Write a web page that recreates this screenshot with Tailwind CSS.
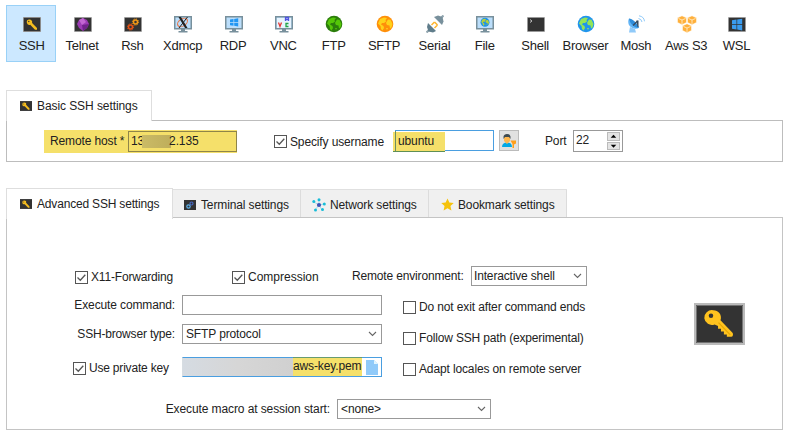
<!DOCTYPE html>
<html lang="en">
<head>
<meta charset="utf-8">
<title>Session settings</title>
<script src="https://cdn.jsdelivr.net/npm/@tailwindcss/browser@4"></script>
</head>
<body class="w-[785px] h-[433px] overflow-hidden bg-white text-[12px] leading-[16px] tracking-[-0.13px] text-[#222] whitespace-nowrap font-['Liberation_Sans',Arial,sans-serif]">
<svg class="hidden">
  <symbol id="key" viewBox="0 0 48 40">
    <path fill="#333" d="M0 0h48v40H0z"/>
    <path fill="#ffc31f" d="M17.500 5.500a7.800 7.800 0 0 1 7.500 10.500L37.500 29.500Q38.500 33 36 33.500H31.500v-2.500h-3v-3h-3v-3h-3v-3l-3.500-1.500A7.800 7.800 0 1 1 17.500 5.500z"/>
    <path stroke="#e8a800" stroke-width="1.200" d="M23 18.500l12 13"/>
    <circle cx="15.300" cy="11.300" r="2.300" fill="#333"/>
  </symbol>
  <symbol id="keysmall" viewBox="0 0 17 14">
    <path fill="#333" d="M0 0h17v14H0z"/>
    <path fill="#f5bd1f" d="M6 2a2.700 2.700 0 0 1 2.600 3.400L13.500 10.500V12.300H11.500L6.700 7.300A2.700 2.700 0 1 1 6 2z"/>
    <circle cx="5.300" cy="4" r=".7" fill="#333"/>
  </symbol>
  <symbol id="monitor" viewBox="0 0 18 17">
    <path fill="#78909c" d="M0 0h18v13.500H0zM7 13h4v2h2.500v1.500h-9V15H7z"/>
    <path fill="#bbdefb" d="M1.500 1.500h15v10.500h-15z"/>
  </symbol>
  <symbol id="globe" viewBox="0 0 16 16">
    <path d="M3 3L7 1.500 10 2 8.500 4 9 5.500 7 7 5 7 4 8.500 6.500 10 7 12 5.500 14.500 4 13 3.500 10 1 7.500zM11 3.500l2.500.2L15.500 8l-1 3.500-1.500 1-.5-3-2.500-.5L9 7l1-2zM9 12l2 0-1 2z"/>
  </symbol>
  <symbol id="check" viewBox="0 0 13 13"><path fill="none" stroke="#555" stroke-width="1.300" d="M2.500 6.500l2.800 2.800 5-5.500"/></symbol>
  <symbol id="down" viewBox="0 0 9 6"><path fill="none" stroke="#666" stroke-width="1.100" d="M1 1l3.500 3.500L8 1"/></symbol>
</svg>

<nav class="flex ml-[6px] pt-[5px] text-[13px] tracking-[-0.25px] [&>div]:w-[50.35px] [&>div]:h-[57px] [&>div]:shrink-0 [&>div]:flex [&>div]:flex-col [&>div]:items-center [&>div]:pl-px [&>div]:pt-[10px] [&>div>svg]:w-[18px] [&>div>svg]:h-[18px] [&>div>svg]:mb-[5px] [&>div>svg]:ml-[1px]">
  <div class="bg-[#cce8ff] shadow-[inset_0_0_0_1px_#99d1f7]"><svg viewBox="0 0 18 18"><path fill="#aaa" d="M0 2h18v15H0z"/><use href="#keysmall" x=".5" y="2.500" width="17" height="14"/></svg>SSH</div>
  <div><svg viewBox="0 0 18 18"><path fill="#333" stroke="#999" stroke-width=".5" d="M.5 2.500h17v14H.5z"/><path fill="#9c3bb5" d="M9 3l4 2 2 4-2 4-4 3-4-3-2-4 2-4z"/><path fill="#c267d2" d="M9 3L5 5l3 5 4-3z"/><path fill="#70238a" d="M8 10l7-1-2 4-4 3z"/></svg>Telnet</div>
  <div><svg viewBox="0 0 18 18"><path fill="#333" stroke="#999" stroke-width=".5" d="M.5 2.500h17v14H.5z"/><g fill="none"><circle cx="11.500" cy="7" r="2" stroke="#f59b16" stroke-width="1.500"/><circle cx="11.500" cy="7" r="3.100" stroke="#f59b16" stroke-dasharray="1.200 1.230"/><circle cx="6.500" cy="12" r="2" stroke="#e65315" stroke-width="1.500"/><circle cx="6.500" cy="12" r="3.100" stroke="#e65315" stroke-dasharray="1.200 1.230"/></g></svg>Rsh</div>
  <div><svg viewBox="0 0 18 18"><use href="#monitor" y="1" width="18" height="17"/><ellipse cx="8.500" cy="7.500" rx="5.500" ry="3.500" fill="none" stroke="#e8794a" stroke-width="1.200" transform="rotate(-35 8.500 7.500)"/><path fill="#222" d="M4.500 2h2.500l6.500 11H11z"/><path stroke="#222" stroke-width="1" d="M13.500 2L5 13"/></svg>Xdmcp</div>
  <div><svg viewBox="0 0 18 18"><use href="#monitor" y="1" width="18" height="17"/><path fill="#2196f3" d="M5 4.500l3.500-.5v3H5zM9.200 3.900l4-.6V7h-4zM5 7.700h3.500v3L5 10.200zM9.200 7.700h4v3.700l-4-.6z"/></svg>RDP</div>
  <div><svg viewBox="0 0 18 18"><use href="#monitor" y="1" width="18" height="17"/><path fill="#e8f4fe" d="M2 3h14v10H2z"/><g fill="none" stroke-width="1.300"><path stroke="#e53935" d="M3.500 7.500L5 11.500 6.500 7.500"/><path stroke="#5155e0" d="M10.500 6V2.500h3V6M10.500 4.500h3"/><path stroke="#22a447" d="M13.500 8.500h-2.500v3h2.500"/></g></svg>VNC</div>
  <div><svg viewBox="0 0 18 18"><circle cx="9" cy="9" r="8.300" fill="#2b7d0b"/><use href="#globe" x="1" y="1" width="16" height="16" fill="#55c708"/></svg>FTP</div>
  <div><svg viewBox="0 0 18 18"><circle cx="9" cy="9" r="8.300" fill="#ff8f0a"/><use href="#globe" x="1" y="1" width="16" height="16" fill="#ffd21a"/></svg>SFTP</div>
  <div><svg viewBox="0 0 18 18"><path stroke="#90a4ae" stroke-width="2.200" d="M.5 17.500l4-4M13.500 4.500l4-4"/><path fill="#607d8b" d="M2 8l8 8-3 1.500-4.500-1L1 12z"/><path fill="#78909c" d="M8 2l8 8 1.500-3.500-1-4.500-4.500-1.500z"/><path stroke="#ffb52e" stroke-width="1.500" d="M5.500 10l3-3M8.500 13l3-3M8.500 7l3 3"/></svg>Serial</div>
  <div><svg viewBox="0 0 18 18"><use href="#monitor" y="1" width="18" height="17"/><circle cx="9" cy="7.300" r="4.500" fill="#1e93e8"/><use href="#globe" x="4.700" y="3" width="8.600" height="8.600" fill="#b7cf38"/></svg>File</div>
  <div><svg viewBox="0 0 18 18"><path fill="#333" stroke="#999" stroke-width=".5" d="M.5 2.500h17v14H.5z"/><path fill="none" stroke="#ccc" stroke-width=".9" d="M3 4.500l2 1.500-2 1.500"/></svg>Shell</div>
  <div><svg viewBox="0 0 18 18"><circle cx="9" cy="9" r="8.300" fill="#2095ed"/><use href="#globe" x="1" y="1" width="16" height="16" fill="#94e557"/></svg>Browser</div>
  <div><svg viewBox="0 0 18 18"><path fill="#64b5f6" d="M2 3.500c-2 4 0 9 5 10 2.500.5 4 0 5-.7z"/><path fill="#2f8ddb" d="M2 3.500c3 0 9 5 10 9.300-4 .2-9-3.300-10-9.300z"/><path fill="#90caf9" d="M3 12l5 2 1 3.500H2z"/><path stroke="#34495e" stroke-width="1.300" d="M6 10.500L10.500 6"/><path fill="#34495e" d="M9.500 5.500h2V12h-1z"/><path fill="none" stroke="#90caf9" d="M11.500 3.500q3 .5 3.500 3.500M12 .8q5 .8 5.500 5.500"/></svg>Mosh</div>
  <div><svg class="overflow-visible" viewBox="0 0 18 18"><g fill="#ffb03b" stroke="#fff" stroke-width=".5"><path id="cube" d="M4 .8l4.500 2v4.700L4 9.700-.5 7.500V2.800z"/><use href="#cube" x="10"/><use href="#cube" x="5" y="8"/></g><path fill="none" stroke="#fff0d0" stroke-width=".8" d="M.5 3.500L4 5l3.500-1.500M4 5v4M10.500 3.500L14 5l3.500-1.500M14 5v4M5.500 11.500L9 13l3.500-1.500M9 13v4"/></svg>Aws S3</div>
  <div><svg viewBox="0 0 18 18"><path fill="#333" stroke="#999" stroke-width=".5" d="M.5 2.500h17v14H.5z"/><path fill="#3a9bee" d="M4 5.300l4.500-.7v4.600H4zM9.200 4.500l5-.8v5.500h-5zM4 9.900h4.500v4.600L4 13.800zM9.200 9.900h5v5.500l-5-.8z"/></svg>WSL</div>
</nav>

<section class="ml-[6px] mt-[28px] w-[777px]">
  <div class="relative z-10 flex items-center w-[146px] h-[31px] pl-[13px] border border-b-0 border-[#dedede] bg-white tracking-[-0.08px]"><svg class="w-[12px] h-[10px] mr-[5px] shrink-0"><use href="#keysmall" width="12" height="10"/></svg>Basic SSH settings</div>
  <div class="-mt-px h-[42px] border border-[#bdbdbd] flex items-start pt-[9px]">
    <div class="flex items-center w-[193px] h-[23px] ml-[37px] pl-[6px] bg-[#f5e06a] leading-[14px]"><span class="pb-[2px]">Remote host *</span>
      <div class="flex items-center ml-auto w-[109px] h-[21px] border border-[#8f8549] pl-[2px]"><span class="pb-[2px]">13</span><span class="w-[29px] h-[13px] -ml-[2px] bg-linear-to-r from-[#cabb66] to-[#bfae5b]"></span><span class="-ml-[2px] pb-[2px]">2.135</span></div>
    </div>
    <div class="flex items-center mt-[1px] ml-[37px] w-[121px] h-[21px]"><svg class="w-[13px] h-[13px] border border-[#555] mr-[3px] shrink-0"><use href="#check" x="-1" y="-1" width="13" height="13"/></svg>Specify username</div>
    <div class="relative w-[99px] h-[21px] border border-[#4a9ee0] pl-[2px] leading-[20px]"><span class="absolute -left-[3px] top-px w-[52px] h-[20px] bg-[#f5e06a] border-b border-[#5f8f55]"></span><span class="absolute -left-px top-0 w-px h-[20px] bg-[#6b8f60]"></span><span class="relative">ubuntu</span></div>
    <div class="ml-[5px] w-[20px] h-[21px] border border-[#bbb] bg-[#e1e1e1] flex items-center justify-center"><svg class="w-[16px] h-[16px]" viewBox="0 0 16 16"><path fill="#03a9e6" d="M1 14q0-4.500 5-4.500t5 4.500z"/><path fill="#ffb74d" d="M3 4h6v4L6 11 3 8z"/><path fill="#3e4a50" d="M2.500 6V3.500Q3 1 6 1t3.500 2.500V6L8 4H4z"/><path fill="#ff9f1a" d="M9.500 7.500h5.500v3l-2 1V15h-1.500v-4z"/></svg></div>
    <div class="mt-[3px] ml-[26px] w-[28px]">Port</div>
    <div class="flex w-[50px] h-[22px] border border-[#999] pl-[2px] leading-[19px]">22<div class="ml-auto mr-[2px] mt-[1px] flex flex-col gap-[1px] [&>svg]:w-[13px] [&>svg]:h-[8.500px] [&>svg]:bg-[#e4e4e4] [&>svg]:border [&>svg]:border-[#bbb]"><svg viewBox="0 0 11 7"><path d="M2.500 5h6l-3-3z"/></svg><svg viewBox="0 0 11 7"><path d="M2.500 2h6l-3 3z"/></svg></div></div>
  </div>
</section>

<section class="ml-[6px] mt-[26px] w-[777px]">
  <div class="relative z-10 flex items-end h-[31px]">
    <div class="flex items-center w-[167px] h-[31px] pl-[13px] pb-px border border-b-0 border-[#dedede] bg-white tracking-[-0.18px]"><svg class="w-[12px] h-[10px] mr-[5px] shrink-0"><use href="#keysmall" width="12" height="10"/></svg>Advanced SSH settings</div>
    <div class="flex self-start mt-px h-[28px] bg-[#f0f0f0] border-t border-[#e0e0e0] [&>div]:flex [&>div]:items-center [&>div]:pt-[3px] [&>div]:border-r [&>div]:border-[#dcdcdc]">
      <div class="w-[128px] pl-[11px]"><svg class="w-[12px] h-[10px] mr-[5px] -mt-px shrink-0" viewBox="0 0 12 10"><path fill="#333" d="M0 0h12v10H0z"/><circle cx="7.500" cy="3.500" r="1.500" fill="none" stroke="#4668c5" stroke-width="1.200"/><circle cx="4.500" cy="6.500" r="1.700" fill="none" stroke="#5eb3ec" stroke-width="1.200"/></svg>Terminal settings</div>
      <div class="w-[128px] pl-[11px]"><svg class="w-[14px] h-[14px] mr-[4px] -mt-px shrink-0" viewBox="0 0 14 14"><path stroke="#a5ddea" d="M7 7V2M7 7l5-1M7 7l3 5M7 7l-4 5M7 7L2 4"/><circle cx="7" cy="7" r="2.100" fill="#3f51b5"/><g fill="#18bcd8"><circle cx="7" cy="1.700" r="1.500"/><circle cx="12.300" cy="6" r="1.500"/><circle cx="10.500" cy="11.500" r="1.500"/><circle cx="3.500" cy="12" r="1.500"/><circle cx="1.800" cy="3.500" r="1.500"/></g></svg>Network settings</div>
      <div class="w-[138px] pl-[12px]"><svg class="w-[13px] h-[13px] mr-[4px] -mt-px shrink-0" viewBox="0 0 14 14"><path fill="#f5c20c" d="M7 .5l2 4.400 4.700.5-3.500 3.200 1 4.800L7 11l-4.200 2.400 1-4.800L.3 5.400 5 4.900z"/></svg>Bookmark settings</div>
    </div>
  </div>
  <div class="-mt-[2px] h-[213px] border border-[#c4c4c4] pt-[48px]">
    <div class="flex items-center h-[20px]">
      <div class="flex items-center ml-[68px] w-[157px] pt-[2px] tracking-[-0.18px]"><svg class="w-[13px] h-[13px] border border-[#555] mr-[3px] shrink-0"><use href="#check" x="-1" y="-1" width="13" height="13"/></svg>X11-Forwarding</div>
      <div class="flex items-center w-[120px] pt-[2px] tracking-normal"><svg class="w-[13px] h-[13px] border border-[#555] mr-[3px] shrink-0"><use href="#check" x="-1" y="-1" width="13" height="13"/></svg>Compression</div>
      <div class="w-[119px] tracking-[-0.16px]">Remote environment:</div>
      <div class="flex items-center w-[116px] h-[20px] border border-[#999] pl-[2px] pr-[4px] tracking-[-0.16px]">Interactive shell<svg class="ml-auto w-[9px] h-[6px]"><use href="#down" width="9" height="6"/></svg></div>
    </div>
    <div class="flex mt-[9px] h-[104px]">
      <div class="w-[375px] [&>div]:flex [&>div]:items-center [&>div]:h-[20px]">
        <div><span class="w-[168px] text-right mr-[7px]">Execute command:</span><span class="w-[200px] h-[20px] border border-[#999]"></span></div>
        <div class="mt-[9px]"><span class="w-[168px] text-right mr-[7px] tracking-[-0.18px]">SSH-browser type:</span><span class="flex items-center w-[200px] h-[20px] border border-[#999] pl-[3px] pr-[4px]">SFTP protocol<svg class="ml-auto w-[9px] h-[6px]"><use href="#down" width="9" height="6"/></svg></span></div>
        <div class="mt-[13px]"><span class="flex items-center pt-[2px] pl-[66px] w-[175px] tracking-[-0.2px]"><svg class="w-[13px] h-[13px] border border-[#555] mr-[3px] shrink-0"><use href="#check" x="-1" y="-1" width="13" height="13"/></svg>Use private key</span><span class="flex items-center w-[200px] h-[20px] border border-[#4a9ee0] border-l-[#d7dde2]"><span class="w-[110px] h-[18px] bg-linear-to-r from-[#d5dbe2] via-[#d6d6d6] to-[#d0d0d0]"></span><span class="w-[69px] h-[18px] bg-[#f5e06a] leading-[17px] shadow-[0_-1px_#679b72]">aws-key.pem</span><svg class="ml-[4px] w-[12px] h-[15px]" viewBox="0 0 12 15"><path fill="#90caf9" d="M0 0h8l4 4v11H0z"/><path fill="#e1f5fe" d="M8 0v4h4z"/></svg></span></div>
      </div>
      <div class="ml-[21px] pt-[4px] w-[291px] flex flex-col gap-[15px] [&>div]:flex [&>div]:items-center [&>div]:h-[16px] [&>div>i]:w-[13px] [&>div>i]:h-[13px] [&>div>i]:border [&>div>i]:border-[#555] [&>div>i]:mr-[3px]">
        <div><i></i>Do not exit after command ends</div>
        <div class="tracking-[-0.16px]"><i></i>Follow SSH path (experimental)</div>
        <div><i></i>Adapt locales on remote server</div>
      </div>
      <svg class="w-[51px] h-[42px] mt-[8px] border-2 border-[#bbb]" viewBox="0 0 48 40" preserveAspectRatio="none"><use href="#key" width="48" height="40"/><path fill="none" stroke="#777" d="M.5.5h47v39H.5z"/></svg>
    </div>
    <div class="flex items-center h-[20px]"><span class="w-[323px] text-right mr-[7px] tracking-[-0.1px]">Execute macro at session start:</span><span class="flex items-center w-[154px] h-[20px] border border-[#999] pl-[3px] pr-[4px]">&lt;none&gt;<svg class="ml-auto w-[9px] h-[6px]"><use href="#down" width="9" height="6"/></svg></span></div>
  </div>
</section>
</body>
</html>
